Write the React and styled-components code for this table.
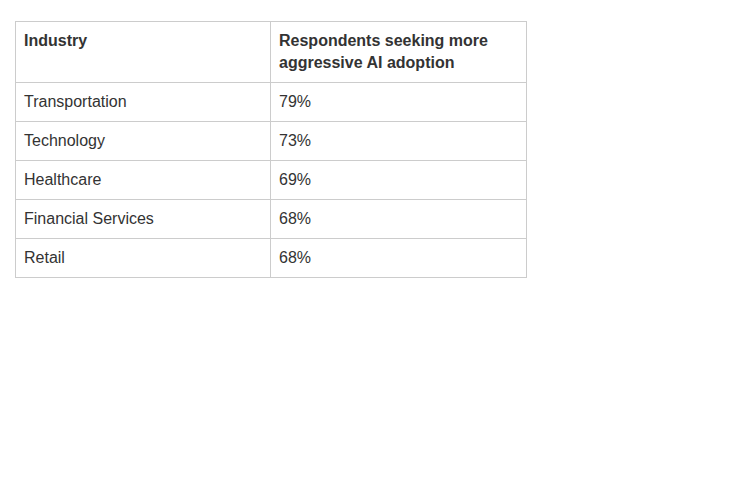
import React from "react";
import styled, { createGlobalStyle } from "styled-components";

const GlobalStyle = createGlobalStyle`
    body {
        margin: 0;
        background: #fff;
        font-family: "Liberation Sans", Arial, sans-serif;
    }
`;

const Page = styled.div`
    padding: 21px 0 0 15px;
`;

const Table = styled.table`
    width: 512px;
    border-collapse: collapse;
    table-layout: fixed;
    color: #333;
    font-size: 16px;
    line-height: 22px;
`;

const HeadCell = styled.th`
    border: 1px solid #ccc;
    padding: 8px 8px;
    text-align: left;
    vertical-align: top;
    font-weight: bold;
    width: ${(props) => props.$width || "auto"};
`;

const Cell = styled.td`
    border: 1px solid #ccc;
    padding: 8px 8px;
    text-align: left;
    vertical-align: top;
`;

const rows = [
    ["Transportation", "79%"],
    ["Technology", "73%"],
    ["Healthcare", "69%"],
    ["Financial Services", "68%"],
    ["Retail", "68%"],
];

const App = () => {
    return (
        <>
            <GlobalStyle />
            <Page>
                <Table>
                    <thead>
                        <tr>
                            <HeadCell $width="238px">Industry</HeadCell>
                            <HeadCell>Respondents seeking more aggressive AI adoption</HeadCell>
                        </tr>
                    </thead>
                    <tbody>
                        {rows.map(([name, value]) => (
                            <tr key={name}>
                                <Cell>{name}</Cell>
                                <Cell>{value}</Cell>
                            </tr>
                        ))}
                    </tbody>
                </Table>
            </Page>
        </>
    );
};

export default App;
